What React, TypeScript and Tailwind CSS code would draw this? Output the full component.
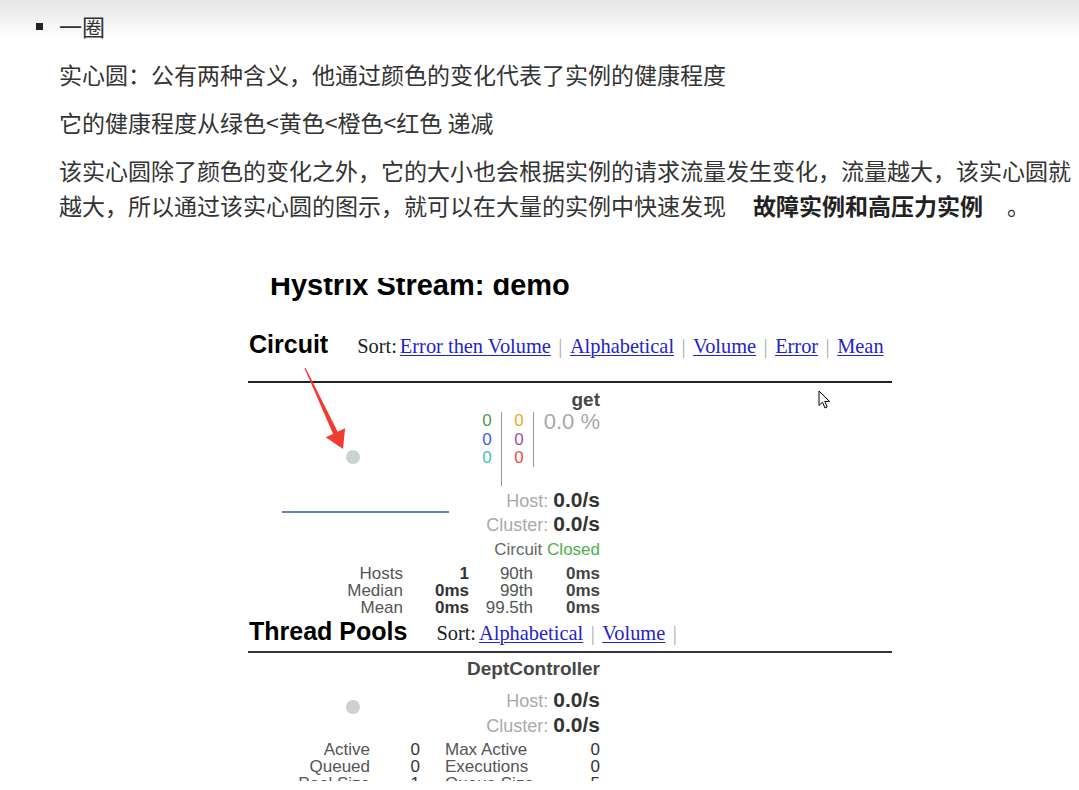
import React from "react";

const Sep = () => <span className="w-[19px] text-center text-[#aaa]">|</span>;
const Lnk = ({ children }: { children: React.ReactNode }) => (
  <a className="text-[#2323cc] underline underline-offset-[2px] decoration-[1px]">{children}</a>
);

export default function App() {
  return (
    <div className="relative h-[790px] w-[1079px] overflow-hidden bg-[linear-gradient(to_bottom,#e6e6e6_0px,#ffffff_40px)]">
      <div className="pl-[36px] pt-[9px] font-['Noto_Sans_CJK_SC',sans-serif] text-[23px] leading-[35px] text-[#333]">
        <div className="flex items-center">
          <span className="mr-[16px] block h-[7px] w-[7px] bg-[#222]" />
          <span>一圈</span>
        </div>
        <div className="pl-[23px]">
          <p className="mt-[13px] whitespace-nowrap">实心圆：公有两种含义，他通过颜色的变化代表了实例的健康程度</p>
          <p className="mt-[13px] whitespace-nowrap">它的健康程度从绿色&lt;黄色&lt;橙色&lt;红色 递减</p>
          <p className="mt-[13px] whitespace-nowrap">
            该实心圆除了颜色的变化之外，它的大小也会根据实例的请求流量发生变化，流量越大，该实心圆就
            <br />
            越大，所以通过该实心圆的图示，就可以在大量的实例中快速发现
            <span className="ml-[27px] font-bold text-[#222]">故障实例和高压力实例</span>
            <span className="ml-[24px]">。</span>
          </p>
        </div>
      </div>

      <div className="ml-[248px] mt-[55px] h-[503px] w-[645px] overflow-hidden font-['Liberation_Sans',Arial,sans-serif]">
        <div className="-mt-[7px] ml-[22px] whitespace-nowrap text-[29px] font-bold leading-[29px] text-black">
          Hystrix Stream: demo
        </div>

        <div className="ml-[1px] mt-[32px] flex items-baseline whitespace-nowrap leading-none">
          <span className="text-[25px] font-bold text-black">Circuit</span>
          <span className="ml-[29px] flex items-baseline font-['Liberation_Serif',serif] text-[20.4px] text-[#222]">
            <span className="mr-[3px]">Sort:</span>
            <Lnk>Error then Volume</Lnk>
            <Sep />
            <Lnk>Alphabetical</Lnk>
            <Sep />
            <Lnk>Volume</Lnk>
            <Sep />
            <Lnk>Error</Lnk>
            <Sep />
            <Lnk>Mean</Lnk>
          </span>
        </div>
        <div className="mt-[24px] h-[2px] w-[644px] bg-[#222]" />

        {/* circuit card */}
        <div className="flex w-[352px]">
          <svg width="230" height="176" className="shrink-0">
            <circle cx="105" cy="74" r="7" fill="#cbd3cc" />
            <line x1="34" y1="129" x2="201" y2="129" stroke="#5b87bf" strokeWidth="2" />
          </svg>
          <div className="flex flex-1 flex-col">
            <div className="mt-[8px] h-[18px] text-right text-[19px] font-bold leading-[18px] text-[#474747]">get</div>
            <div className="flex h-[81px] items-start pt-[3px] text-[17px] leading-[18.5px]">
              <div className="w-[18px] text-center">
                <div className="text-[#4e9a4e]">0</div>
                <div className="text-[#3a5ef0]">0</div>
                <div className="text-[#3cc6b4]">0</div>
              </div>
              <div className="ml-[5px] h-[74px] w-px bg-[#9a9a9a]" />
              <div className="ml-[8px] w-[18px] text-center">
                <div className="text-[#f5a623]">0</div>
                <div className="text-[#a34fa3]">0</div>
                <div className="text-[#ec4a4a]">0</div>
              </div>
              <div className="ml-[5px] h-[55px] w-px bg-[#9a9a9a]" />
              <div className="ml-[6px] flex-1 whitespace-nowrap text-right text-[22px] leading-[20px] text-[#a8a8a8]">0.0 %</div>
            </div>
            <div className="flex h-[20px] items-baseline justify-end whitespace-nowrap leading-[20px]">
              <span className="text-[18px] text-[#aaa]">Host:&nbsp;</span>
              <span className="text-[21px] font-bold text-[#333]">0.0/s</span>
            </div>
            <div className="mt-[4px] flex h-[20px] items-baseline justify-end whitespace-nowrap leading-[20px]">
              <span className="text-[18px] text-[#aaa]">Cluster:&nbsp;</span>
              <span className="text-[21px] font-bold text-[#333]">0.0/s</span>
            </div>
            <div className="mt-[7px] h-[18px] whitespace-nowrap text-right text-[17px] leading-[18px] text-[#666]">
              Circuit <span className="text-[#4caf50]">Closed</span>
            </div>
          </div>
        </div>
        <div className="mt-[6px] grid w-[352px] grid-cols-[155px_66px_64px_67px] text-right text-[17px] leading-[17px]">
          <span className="text-[#555]">Hosts</span>
          <span className="font-bold text-[#333]">1</span>
          <span className="text-[#555]">90th</span>
          <span className="font-bold text-[#444]">0ms</span>
          <span className="text-[#555]">Median</span>
          <span className="font-bold text-[#333]">0ms</span>
          <span className="text-[#555]">99th</span>
          <span className="font-bold text-[#444]">0ms</span>
          <span className="text-[#555]">Mean</span>
          <span className="font-bold text-[#333]">0ms</span>
          <span className="text-[#555]">99.5th</span>
          <span className="font-bold text-[#444]">0ms</span>
        </div>

        <div className="ml-[1px] mt-[3px] flex items-baseline whitespace-nowrap leading-none">
          <span className="text-[25px] font-bold text-black">Thread Pools</span>
          <span className="ml-[29px] flex items-baseline font-['Liberation_Serif',serif] text-[20.4px] text-[#222]">
            <span className="mr-[3px]">Sort:</span>
            <Lnk>Alphabetical</Lnk>
            <Sep />
            <Lnk>Volume</Lnk>
            <Sep />
          </span>
        </div>
        <div className="mt-[7px] h-[2px] w-[644px] bg-[#333]" />

        {/* thread pool card */}
        <div className="mt-[7px] h-[18px] w-[352px] text-right text-[19px] font-bold leading-[18px] text-[#474747]">
          DeptController
        </div>
        <div className="flex w-[352px]">
          <svg width="230" height="57" className="shrink-0">
            <circle cx="105" cy="29" r="7" fill="#cbd3cc" />
          </svg>
          <div className="flex flex-1 flex-col">
            <div className="mt-[12px] flex h-[20px] items-baseline justify-end whitespace-nowrap leading-[20px]">
              <span className="text-[18px] text-[#aaa]">Host:&nbsp;</span>
              <span className="text-[21px] font-bold text-[#333]">0.0/s</span>
            </div>
            <div className="mt-[5px] flex h-[20px] items-baseline justify-end whitespace-nowrap leading-[20px]">
              <span className="text-[18px] text-[#aaa]">Cluster:&nbsp;</span>
              <span className="text-[21px] font-bold text-[#333]">0.0/s</span>
            </div>
          </div>
        </div>
        <div className="mt-[6px] grid w-[352px] grid-cols-[122px_50px_132px_48px] text-[17px] leading-[17px] text-[#555]">
          <span className="text-right">Active</span>
          <span className="text-right text-[#333]">0</span>
          <span className="pl-[25px]">Max Active</span>
          <span className="text-right text-[#333]">0</span>
          <span className="text-right">Queued</span>
          <span className="text-right text-[#333]">0</span>
          <span className="pl-[25px]">Executions</span>
          <span className="text-right text-[#333]">0</span>
          <span className="text-right">Pool Size</span>
          <span className="text-right text-[#333]">1</span>
          <span className="pl-[25px]">Queue Size</span>
          <span className="text-right text-[#333]">5</span>
        </div>
      </div>

      {/* red annotation arrow */}
      <svg className="absolute left-[290px] top-[360px]" width="70" height="100">
        <polygon
          points="14.5,8.2 15.5,7.8 47.7,71.7 55.1,68.3 53,89 35.7,77.3 43.1,73.9"
          fill="#f23c32"
        />
      </svg>

      {/* mouse cursor */}
      <svg className="absolute left-[818px] top-[390px]" width="14" height="20" viewBox="0 0 14 20">
        <path d="M1 1 L1 15.5 L4.5 12.2 L7 18 L9.2 17 L6.8 11.4 L11.5 11.4 Z" fill="#fff" stroke="#000" strokeWidth="1" strokeLinejoin="round" />
      </svg>
    </div>
  );
}
